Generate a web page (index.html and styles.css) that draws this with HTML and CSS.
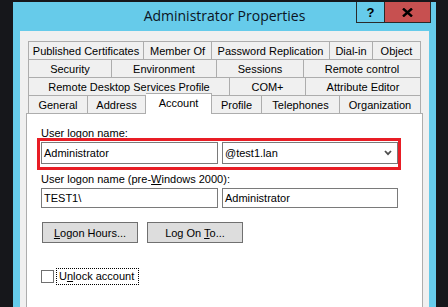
FILE: index.html
```html
<!DOCTYPE html>
<html lang="en">
<head>
    <meta charset="utf-8">
    <title>Administrator Properties</title>
    <link rel="stylesheet" href="styles.css">
</head>
<body>

<div class="window">
    <!-- title bar -->
    <div class="titlebar">
        <div></div>
        <div class="title">Administrator Properties</div>
        <div class="controls">
            <div class="ctl help">?</div>
            <div class="ctl close">
                <svg width="11" height="9" viewBox="0 0 11 9">
                    <path d="M1 0.5 L10 8.5 M10 0.5 L1 8.5" stroke="#000" stroke-width="2.4" fill="none"/>
                </svg>
            </div>
        </div>
    </div>

    <div class="client">
        <div class="tabs">
            <div class="tab-row row1">
                <div class="tab">Published Certificates</div>
                <div class="tab">Member Of</div>
                <div class="tab">Password Replication</div>
                <div class="tab">Dial-in</div>
                <div class="tab">Object</div>
            </div>
            <div class="tab-row row2">
                <div class="tab">Security</div>
                <div class="tab">Environment</div>
                <div class="tab">Sessions</div>
                <div class="tab">Remote control</div>
            </div>
            <div class="tab-row row3">
                <div class="tab">Remote Desktop Services Profile</div>
                <div class="tab">COM+</div>
                <div class="tab">Attribute Editor</div>
            </div>
            <div class="tab-row row4">
                <div class="tab">General</div>
                <div class="tab">Address</div>
                <div class="tab active">Account</div>
                <div class="tab">Profile</div>
                <div class="tab">Telephones</div>
                <div class="tab">Organization</div>
            </div>
        </div>

        <div class="page">
            <div class="label">User logon name:</div>
            <div class="field-row logon-row">
                <div class="textbox tall">Administrator</div>
                <div class="combo">
                    <span>@test1.lan</span>
                    <svg width="8" height="6" viewBox="0 0 8 6">
                        <path d="M1 1 L4 4.2 L7 1" stroke="#4d4d4d" stroke-width="1.8" fill="none"/>
                    </svg>
                </div>
                <div class="highlight"></div>
            </div>

            <div class="label label-2">User logon name (pre-<u>W</u>indows 2000):</div>
            <div class="field-row">
                <div class="textbox">TEST1\</div>
                <div class="textbox">Administrator</div>
            </div>

            <div class="buttons">
                <div class="btn"><span><u>L</u>ogon Hours...</span></div>
                <div class="btn"><span>Log On <u>T</u>o...</span></div>
            </div>

            <div class="check-row">
                <div class="checkbox"></div>
                <div class="check-label">U<u>n</u>lock account</div>
            </div>
        </div>
    </div>
</div>

</body>
</html>
```

FILE: styles.css
```css
body {
    margin: 0;
    height: 307px;
    overflow: hidden;
    background-color: #16171b;
    font-family: "Liberation Sans", Arial, sans-serif;
    font-size: 11px;
    color: #000;
}

.window {
    margin: 2px 0 0 13px;
    width: 423px;
    height: 305px;
    background-color: #66cbea;
}

/* title bar */
.titlebar {
    display: grid;
    grid-template-columns: 1fr auto 1fr;
    height: 29px;
}

.title {
    font-family: "Open Sans", sans-serif;
    font-size: 14px;
    line-height: 27px;
    color: #0b1424;
}

.controls {
    justify-self: end;
    align-self: start;
    display: flex;
    margin-right: 5px;
}

.ctl {
    box-sizing: border-box;
    height: 21px;
    border: 1px solid #2a2a2a;
    border-top: none;
    display: flex;
    align-items: center;
    justify-content: center;
}

.help {
    width: 28px;
    border-right: none;
    font-weight: bold;
    font-size: 13px;
}

.close {
    width: 47px;
    background-color: #c75050;
}

/* client area */
.client {
    box-sizing: border-box;
    margin: 0 7px;
    height: 276px;
    padding: 10px 6px 0;
    background-color: #f0f0f0;
}

.tabs {
    margin: 0 2px;
}

.tab-row {
    display: grid;
    height: 18px;
    align-items: start;
}

.row1 { grid-template-columns: 116px 68px 118px 43px 1fr; }
.row2 { grid-template-columns: 84px 105px 87px 1fr; }
.row3 { grid-template-columns: 202px 76px 1fr; }
.row4 { grid-template-columns: 60px 58px 66px 50px 78px 1fr; }

.tab {
    box-sizing: border-box;
    height: 18px;
    border-top: 1px solid #adadad;
    border-right: 1px solid #adadad;
    display: flex;
    align-items: center;
    justify-content: center;
    white-space: nowrap;
    background-color: #f0f0f0;
}

.tab:first-child {
    border-left: 1px solid #adadad;
}

.tab.active {
    position: relative;
    z-index: 1;
    height: 21px;
    margin-top: -2px;
    padding-bottom: 3px;
    background-color: #fff;
}

.page {
    box-sizing: border-box;
    height: 194px;
    padding: 13px 0 0 14px;
    border: 1px solid #adadad;
    border-bottom: none;
    background-color: #fff;
}

.label {
    line-height: 13px;
    margin-bottom: 2px;
}

.label-2 {
    margin-top: 9px;
}

.field-row {
    display: grid;
    grid-template-columns: 177px 176px;
    gap: 4px;
}

.logon-row {
    position: relative;
}

.textbox,
.combo {
    box-sizing: border-box;
    height: 20px;
    padding-left: 2px;
    border: 1px solid #7a7a7a;
    background-color: #fff;
    display: flex;
    align-items: center;
}

.textbox.tall,
.combo {
    height: 22px;
}

.combo {
    justify-content: space-between;
    padding-right: 5px;
}

/* red annotation box */
.highlight {
    position: absolute;
    top: -4px;
    left: -4px;
    width: 364px;
    height: 32px;
    box-sizing: border-box;
    border: 3px solid #e81d25;
}

.buttons {
    display: flex;
    gap: 9px;
    margin: 14px 0 0 1px;
}

.btn {
    box-sizing: border-box;
    width: 96px;
    height: 21px;
    border: 1px solid #707070;
    background-color: #dddddd;
    display: flex;
    align-items: center;
    justify-content: center;
}

.check-row {
    display: flex;
    align-items: center;
    gap: 2px;
    margin-top: 25px;
}

.checkbox {
    box-sizing: border-box;
    width: 13px;
    height: 13px;
    border: 1px solid #707070;
    background-color: #fff;
}

.check-label {
    padding: 1px 4px 1px 2px;
    border: 1px dotted #000;
    line-height: 13px;
}
```
